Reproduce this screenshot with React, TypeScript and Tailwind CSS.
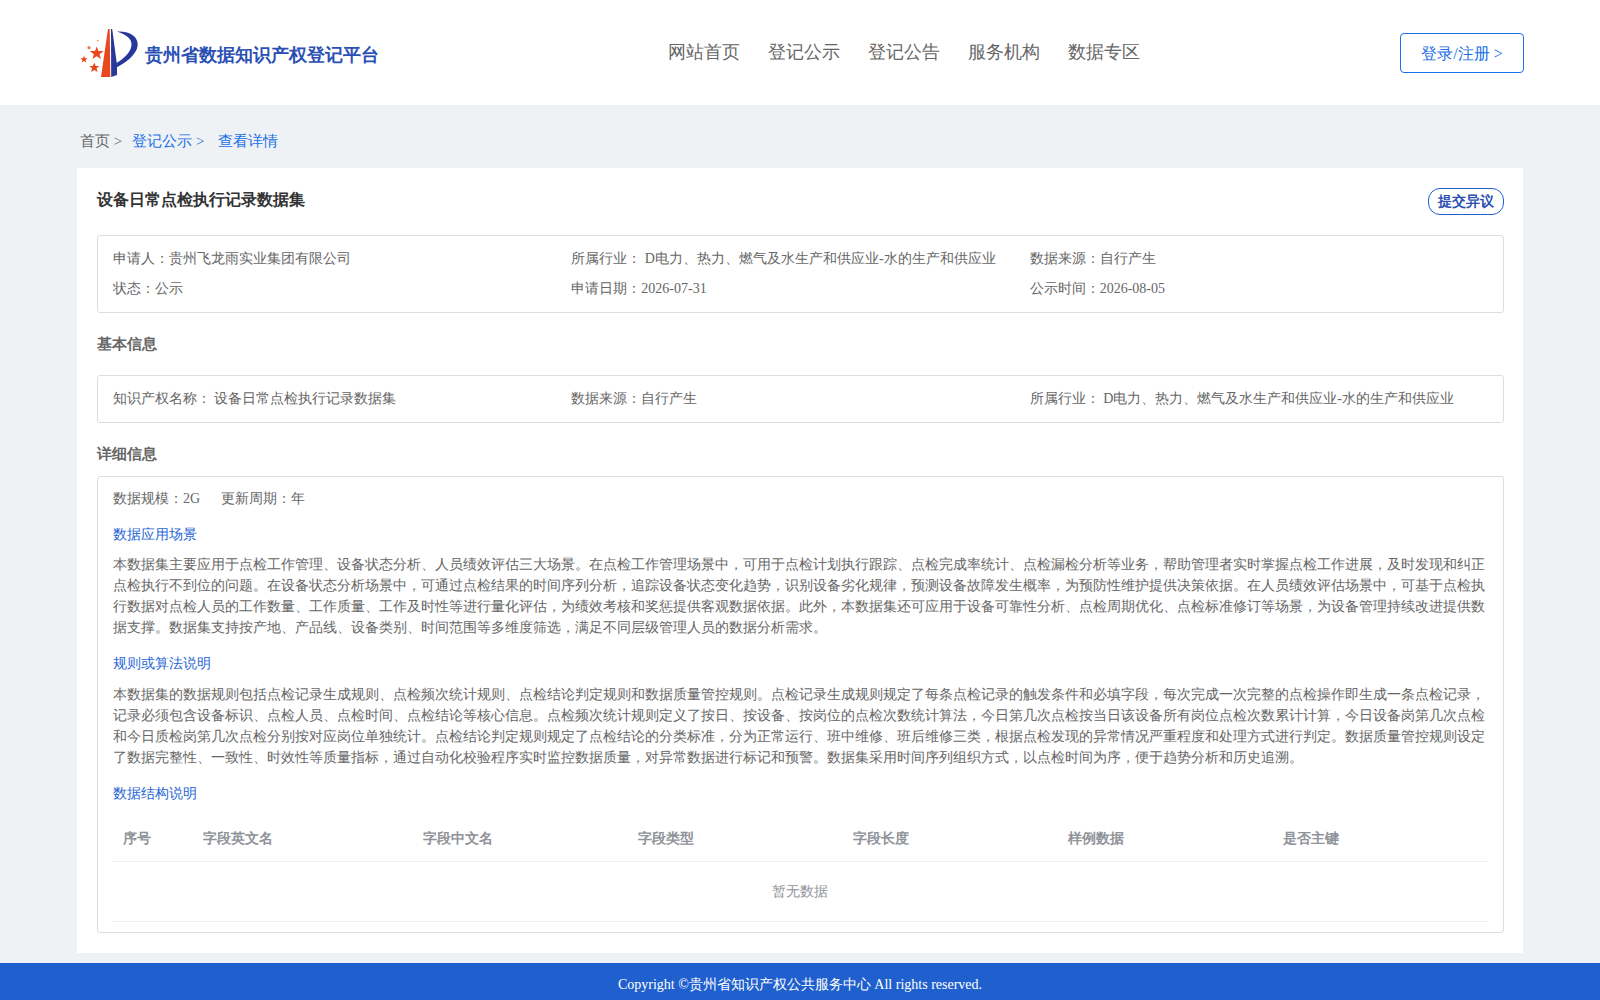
const font = "[font-family:'Liberation_Serif',serif]";

const Logo = () => (
  <svg width="70" height="60" viewBox="0 0 70 60" className="shrink-0">
    <path d="M33 4 L34.7 4 L35.3 52 L26 52 Z" fill="#e8481c" />
    <path d="M36 4 L37.2 4 L42 40 L42 50 L36.2 52 Z" fill="#27379a" />
    <path d="M42 6.5 C56 6 63 12 62.7 20 C62 30 50 38 40.5 43 L40 39 C47 35 56 28 56.5 20 C57 13.5 51 9.5 42 6.5 Z" fill="#27379a" />
    <polygon points="21.7,21.5 23.4,26 28.7,26 24.5,29.2 26,34 21.7,31.2 17.4,34 18.9,29.2 14.7,26 20,26" fill="#e8481c" />
    <polygon points="9,30.8 10,33.2 12.6,33.2 10.6,34.9 11.4,37.4 9,36 6.6,37.4 7.4,34.9 5.4,33.2 8,33.2" fill="#e8481c" />
    <polygon points="19.3,37.4 20.7,40.9 24.5,40.9 21.5,43.2 22.6,47 19.3,44.9 16,47 17.1,43.2 14.1,40.9 17.9,40.9" fill="#e8481c" />
    <circle cx="14" cy="22.7" r="1.6" fill="#ee7a50" />
    <circle cx="22.7" cy="15.7" r="0.9" fill="#ee9a70" />
  </svg>
);

const navItems = ["网站首页", "登记公示", "登记公告", "服务机构", "数据专区"];

const Header = () => (
  <header className="h-[105px] bg-white flex items-center pl-[75px] pr-[76px]">
    <div className="w-[592.5px] shrink-0 flex items-center mt-[5px]">
      <Logo />
      <span className="text-[18px] font-bold text-[#2b50b4] mt-[1px]">贵州省数据知识产权登记平台</span>
    </div>
    <nav className="flex gap-[28px] text-[18px] text-[#666] leading-[26px] -mt-[2px]">
      {navItems.map((n) => (
        <a key={n}>{n}</a>
      ))}
    </nav>
    <button className="ml-auto w-[124px] h-[40px] pt-[3px] border border-[#1a6fe8] rounded-[4px] text-[16px] text-[#1a6fe8] bg-white">
      登录/注册 &gt;
    </button>
  </header>
);

const Breadcrumb = () => (
  <div className="h-[63px] pl-[80px] pt-[25px] text-[15px] leading-[22px] flex">
    <span className="text-[#666]">首页 &gt;</span>
    <span className="text-[#1a6fe8] ml-[10px]">登记公示 &gt;</span>
    <span className="text-[#1a6fe8] ml-[14px]">查看详情</span>
  </div>
);

const boxCls = "border border-[#ddd] rounded-[3px] px-[15px]";

const Summary = () => (
  <div className={`${boxCls} mt-[20px] h-[78px] pt-[12px] grid grid-cols-3 auto-rows-[30px] text-[14px] text-[#666] leading-[21px]`}>
    <div>申请人：贵州飞龙雨实业集团有限公司</div>
    <div>所属行业： D电力、热力、燃气及水生产和供应业-水的生产和供应业</div>
    <div>数据来源：自行产生</div>
    <div>状态：公示</div>
    <div>申请日期：2026-07-31</div>
    <div>公示时间：2026-08-05</div>
  </div>
);

const BasicInfo = () => (
  <div className={`${boxCls} h-[48px] pb-[2px] grid grid-cols-3 items-center text-[14px] text-[#666] leading-[21px]`}>
    <div>知识产权名称： <span className="-ml-[1px]">设备日常点检执行记录数据集</span></div>
    <div>数据来源：自行产生</div>
    <div>所属行业： D电力、热力、燃气及水生产和供应业-水的生产和供应业</div>
  </div>
);

const scene =
  "本数据集主要应用于点检工作管理、设备状态分析、人员绩效评估三大场景。在点检工作管理场景中，可用于点检计划执行跟踪、点检完成率统计、点检漏检分析等业务，帮助管理者实时掌握点检工作进展，及时发现和纠正点检执行不到位的问题。在设备状态分析场景中，可通过点检结果的时间序列分析，追踪设备状态变化趋势，识别设备劣化规律，预测设备故障发生概率，为预防性维护提供决策依据。在人员绩效评估场景中，可基于点检执行数据对点检人员的工作数量、工作质量、工作及时性等进行量化评估，为绩效考核和奖惩提供客观数据依据。此外，本数据集还可应用于设备可靠性分析、点检周期优化、点检标准修订等场景，为设备管理持续改进提供数据支撑。数据集支持按产地、产品线、设备类别、时间范围等多维度筛选，满足不同层级管理人员的数据分析需求。";

const rules =
  "本数据集的数据规则包括点检记录生成规则、点检频次统计规则、点检结论判定规则和数据质量管控规则。点检记录生成规则规定了每条点检记录的触发条件和必填字段，每次完成一次完整的点检操作即生成一条点检记录，记录必须包含设备标识、点检人员、点检时间、点检结论等核心信息。点检频次统计规则定义了按日、按设备、按岗位的点检次数统计算法，今日第几次点检按当日该设备所有岗位点检次数累计计算，今日设备岗第几次点检和今日质检岗第几次点检分别按对应岗位单独统计。点检结论判定规则规定了点检结论的分类标准，分为正常运行、班中维修、班后维修三类，根据点检发现的异常情况严重程度和处理方式进行判定。数据质量管控规则设定了数据完整性、一致性、时效性等质量指标，通过自动化校验程序实时监控数据质量，对异常数据进行标记和预警。数据集采用时间序列组织方式，以点检时间为序，便于趋势分析和历史追溯。";

const columns = ["序号", "字段英文名", "字段中文名", "字段类型", "字段长度", "样例数据", "是否主键"];

const FieldTable = () => (
  <table className="w-full table-fixed text-[14px] mt-[9px]">
    <colgroup>
      <col className="w-[80px]" />
      <col className="w-[220px]" />
      <col className="w-[215px]" />
      <col className="w-[215px]" />
      <col className="w-[215px]" />
      <col className="w-[215px]" />
      <col />
    </colgroup>
    <thead>
      <tr className="border-b border-[#ebeef5] h-[48px]">
        {columns.map((c) => (
          <th key={c} className="text-left font-bold text-[#909399] px-[10px] pt-[3px]">
            {c}
          </th>
        ))}
      </tr>
    </thead>
    <tbody>
      <tr className="border-b border-[#ebeef5] h-[60px]">
        <td colSpan={7} className="text-center text-[#909399] pr-[2px]">
          暂无数据
        </td>
      </tr>
    </tbody>
  </table>
);

const Detail = () => (
  <div className={`${boxCls} h-[457px] text-[14px] leading-[21px] text-[#666] pt-[11px]`}>
    <div className="flex gap-[21px]">
      <span>数据规模：2G</span>
      <span>更新周期：年</span>
    </div>
    <div className="text-[#1f66d6] mt-[15px]">数据应用场景</div>
    <p className="mt-[9px]">{scene}</p>
    <div className="text-[#1f66d6] mt-[15px]">规则或算法说明</div>
    <p className="mt-[10px]">{rules}</p>
    <div className="text-[#1f66d6] mt-[15px]">数据结构说明</div>
    <FieldTable />
  </div>
);

const Footer = () => (
  <footer className="h-[37px] bg-[#205fce] text-white text-[14px] leading-[21px] text-center pt-[11px]">
    Copyright ©贵州省知识产权公共服务中心 All rights reserved.
  </footer>
);

export default function App() {
  return (
    <div className={`${font} bg-[#eff2f5] h-[1000px] overflow-hidden`}>
      <Header />
      <Breadcrumb />
      <main className="mx-[77px] h-[785px] bg-white pl-[20px] pr-[19px] pt-[20px] mb-[10px]">
        <div className="flex justify-between">
          <h1 className="text-[16px] font-bold text-[#333] leading-[24px]">设备日常点检执行记录数据集</h1>
          <button className="w-[76px] h-[27px] border border-[#2060ce] rounded-[12px] text-[14px] font-bold text-[#2b50b4]">
            提交异议
          </button>
        </div>
        <Summary />
        <h2 className="text-[15px] font-bold text-[#666] leading-[21px] mt-[21px] mb-[20px]">基本信息</h2>
        <BasicInfo />
        <h2 className="text-[15px] font-bold text-[#666] leading-[21px] mt-[21px] mb-[11px]">详细信息</h2>
        <Detail />
      </main>
      <Footer />
    </div>
  );
}
